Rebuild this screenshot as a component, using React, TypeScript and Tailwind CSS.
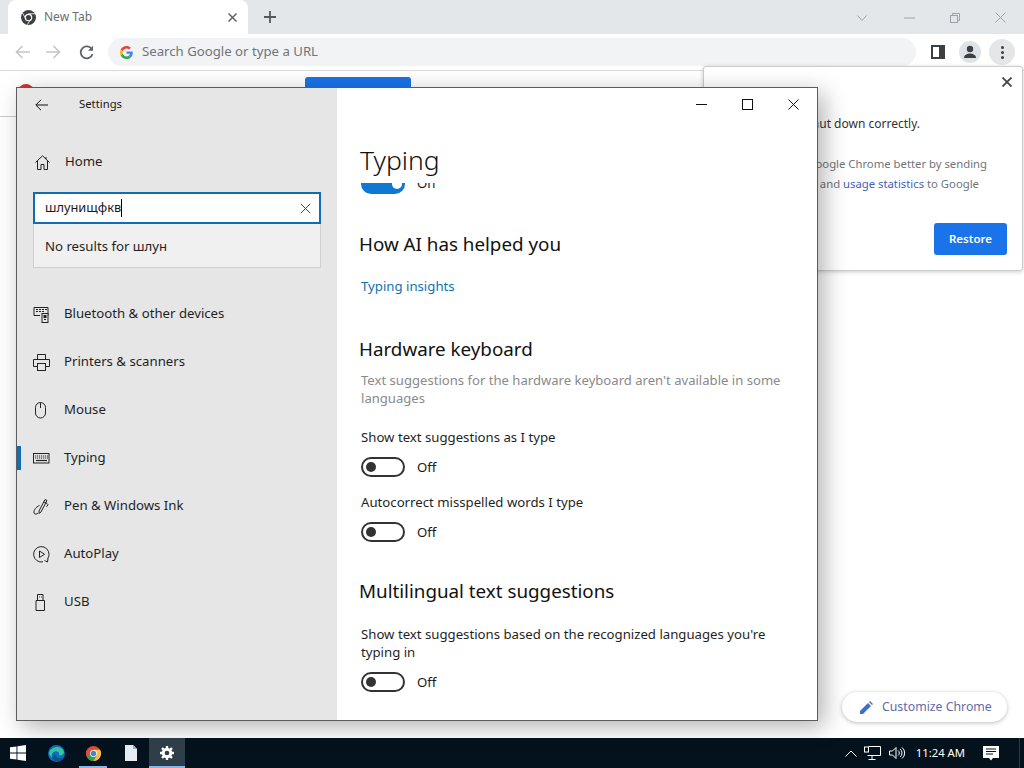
const sans = '[font-family:"Noto_Sans",sans-serif]';

function Toggle() {
  return (
    <div className="flex h-5 items-center">
      <div className="flex h-5 w-11 items-center rounded-full border-2 border-[#333333] pl-[3px]">
        <div className="h-2.5 w-2.5 rounded-full bg-[#333333]" />
      </div>
      <span className="ml-3 text-[13.2px] leading-5 text-[#1a1a1a]">Off</span>
    </div>
  );
}

function SectionHeading({ children, className }: { children: React.ReactNode; className: string }) {
  return <h2 className={`-ml-[2px] text-[18.8px] leading-7 text-[#111111] ${className}`}>{children}</h2>;
}

function NavRow({ icon, label, selected }: { icon: React.ReactNode; label: string; selected?: boolean }) {
  return (
    <div className="relative flex h-12 items-center pl-4">
      {selected && <div className="absolute left-0 top-3 h-6 w-1 bg-[#0f6cb5]" />}
      <div className="flex w-[31px] items-center text-[#222222]">{icon}</div>
      <span className="text-[13.2px] text-[#1f1f1f]">{label}</span>
    </div>
  );
}

const stroke = { fill: 'none', stroke: 'currentColor', strokeWidth: 1 };

const navItems = [
  {
    label: 'Bluetooth & other devices',
    icon: (
      <svg width="17" height="17" viewBox="0 0 17 17" {...stroke}>
        <path d="M1 1.5h14v8H11M1 1.5v8h6" />
        <path d="M3 3.5h2M6 3.5h2M9 3.5h2M12 3.5h2M3 5.5h2M6 5.5h2M9 5.5h2" strokeWidth="1.2" />
        <rect x="9" y="7.5" width="6" height="9" fill="#e6e6e6" />
        <rect x="11" y="9.5" width="2" height="2" fill="currentColor" />
        <path d="M11 13.5h2" />
      </svg>
    ),
  },
  {
    label: 'Printers & scanners',
    icon: (
      <svg width="17" height="17" viewBox="0 0 17 17" {...stroke}>
        <path d="M4.5 5.5v-5h8v5M4.5 12.5h-4v-7h16v7h-4" />
        <rect x="4.5" y="9.5" width="8" height="7" />
      </svg>
    ),
  },
  {
    label: 'Mouse',
    icon: (
      <svg width="17" height="17" viewBox="0 0 17 17" {...stroke}>
        <rect x="2.5" y="0.5" width="10" height="15.5" rx="5" />
        <path d="M7.5 1v5" />
      </svg>
    ),
  },
  {
    label: 'Typing',
    selected: true,
    icon: (
      <svg width="17" height="11" viewBox="0 0 17 11" {...stroke}>
        <rect x="0.5" y="0.5" width="15.5" height="9.5" />
        <path d="M2 3h13M2 5h13" strokeDasharray="1.2 0.8" strokeWidth="1.2" />
        <path d="M3 7.5h11" strokeWidth="1.2" />
      </svg>
    ),
  },
  {
    label: 'Pen & Windows Ink',
    icon: (
      <svg width="17" height="17" viewBox="0 0 17 17" {...stroke}>
        <path d="M6 13 12 1.5l2 1L8 14l-2 1.5zM11 4l2.5 1.2 1.5 1.5-1.5 2" />
        <path d="M6.5 7.5C3 9 .5 12 1 15c.5 1.5 3 1.5 4 0" />
      </svg>
    ),
  },
  {
    label: 'AutoPlay',
    icon: (
      <svg width="17" height="17" viewBox="0 0 17 17" {...stroke}>
        <path d="M10 15.8A7.7 7.7 0 1 1 16 8.5c0 1.700-.5 3-1.400 4.300" />
        <path d="M6.500 5v6.500l5-3.200zM11.500 14.500l3 1.500.5-3.500" />
      </svg>
    ),
  },
  {
    label: 'USB',
    icon: (
      <svg width="17" height="17" viewBox="0 0 17 17" {...stroke}>
        <path d="M3 6.500h8.500v10H3zM4.500 6.500V.5h5.500v6" />
        <path d="M6 3h.800M8 3h.800" />
      </svg>
    ),
  },
];

function SettingsWindow() {
  return (
    <div className="absolute left-4 top-[87px] flex h-[634px] w-[802px] border border-[#5c5c5c] shadow-[6px_6px_22px_rgba(0,0,0,0.3)]">
      <aside className="flex w-80 flex-col bg-[#e6e6e6]">
        <div className="flex h-[33px] items-center pl-[18px]">
          <svg width="13" height="12" viewBox="0 0 13 12" fill="none" stroke="#111" strokeWidth="1">
            <path d="M13 6H1M6 .8.800 6 6 11.200" />
          </svg>
          <span className="ml-[31px] text-[11.3px] text-[#1a1a1a]">Settings</span>
        </div>
        <div className="mt-[26px] flex h-[30px] items-center pl-[18px]">
          <svg width="15" height="15" viewBox="0 0 15 15" fill="none" stroke="#222" strokeWidth="1">
            <path d="M.5 7.500 7.500.8l7 6.700M2.500 6v8.500h3.500v-5h3v5h3.500V6M11 2v2" />
          </svg>
          <span className="ml-[15px] text-[13.2px] text-[#1f1f1f]">Home</span>
        </div>
        <div className="ml-4 mt-[15px] flex h-8 w-[288px] items-center border-2 border-[#0f6cb5] bg-white pl-[10px] pr-[8px]">
          <span className="text-[12.8px] text-[#1a1a1a]">шлунищфкв</span>
          <span className="h-[18px] w-px bg-black" />
          <svg className="ml-auto" width="11" height="11" viewBox="0 0 11 11" stroke="#444" strokeWidth="1">
            <path d="m.8.800 9.400 9.400M10.200.800.800 10.200" />
          </svg>
        </div>
        <div className="ml-4 flex h-11 w-[288px] items-center border border-t-0 border-[#cfcfcf] bg-[#f0f0f0] pl-[11px] pt-[2px]">
          <span className="text-[13.2px] text-[#1f1f1f]">No results for шлун</span>
        </div>
        <nav className="mt-[22px]">
          {navItems.map((item) => (
            <NavRow key={item.label} {...item} />
          ))}
        </nav>
      </aside>

      <main className="flex flex-1 flex-col bg-white">
        <div className="flex h-[33px] items-center justify-end">
          <svg className="mr-[35px]" width="11" height="11" viewBox="0 0 11 11" stroke="#111">
            <path d="M0 5.500h11" />
          </svg>
          <svg className="mr-[35px]" width="11" height="11" viewBox="0 0 11 11" fill="none" stroke="#111">
            <rect x="0.500" y="0.500" width="10" height="10" />
          </svg>
          <svg className="mr-[18px]" width="11" height="11" viewBox="0 0 11 11" stroke="#111">
            <path d="m.5.500 10 10M10.500.500l-10 10" />
          </svg>
        </div>
        <div className="pb-[2px] pl-[23px] pt-[18px] text-[26.5px] font-light leading-[42px] text-[#111111]">Typing</div>
        <div className="flex-1 overflow-hidden pl-6 pr-[30px]">
          <div className="-mt-[9px] flex h-5 items-center">
            <div className="flex h-5 w-11 items-center justify-end rounded-full bg-[#0f78d4] pr-[3px]">
              <div className="h-2.5 w-2.5 rounded-full bg-white" />
            </div>
            <span className="ml-3 text-[13.2px] text-[#1a1a1a]">On</span>
          </div>
          <SectionHeading className="mt-[36px]">How AI has helped you</SectionHeading>
          <a className="mt-[18px] block text-[13.2px] leading-5 text-[#0f72b0]">Typing insights</a>
          <SectionHeading className="mt-[39px]">Hardware keyboard</SectionHeading>
          <p className="mt-[8px] text-[13.1px] leading-[18px] text-[#8a8a8a]">
            Text suggestions for the hardware keyboard aren't available in some languages
          </p>
          <p className="mt-[20px] text-[13.2px] leading-5 text-[#1f1f1f]">Show text suggestions as I type</p>
          <div className="mt-[10px]">
            <Toggle />
          </div>
          <p className="mt-[15px] text-[13.2px] leading-5 text-[#1f1f1f]">Autocorrect misspelled words I type</p>
          <div className="mt-[10px]">
            <Toggle />
          </div>
          <SectionHeading className="mt-[35px]">Multilingual text suggestions</SectionHeading>
          <p className="mt-[20px] text-[13.2px] leading-[18px] text-[#1f1f1f]">
            Show text suggestions based on the recognized languages you're typing in
          </p>
          <div className="mt-[11px]">
            <Toggle />
          </div>
        </div>
      </main>
    </div>
  );
}

function RestoreBubble() {
  return (
    <div className="absolute left-[703px] top-[66px] flex h-[205px] w-[320px] flex-col rounded-[3px] border border-[#cccccc] bg-white shadow-[0_1px_4px_rgba(0,0,0,0.2)]">
      <svg className="absolute right-[10px] top-[10px]" width="10" height="10" viewBox="0 0 10 10" stroke="#444" strokeWidth="1.800">
        <path d="m.5.500 9 9M9.500.500l-9 9" />
      </svg>
      <p className="mr-[102px] mt-[47px] self-end whitespace-nowrap text-[12px] leading-5 text-[#333333]">
        Chrome didn't shut down correctly.
      </p>
      <p className="mr-[35px] mt-[20px] self-end whitespace-nowrap text-[11.3px] leading-5 text-[#70757a]">
        Help make Google Chrome better by sending
      </p>
      <p className="mr-[43px] self-end whitespace-nowrap text-[11.3px] leading-5 text-[#70757a]">
        crash reports and <span className="text-[#3f62b5]">usage statistics</span> to Google
      </p>
      <button className="mr-[15px] mt-[29px] flex h-8 w-[73px] items-center justify-center self-end rounded-[3px] bg-[#1a73e8] text-[11.5px] font-semibold text-white">
        Restore
      </button>
    </div>
  );
}

function ChromeIcon({ size }: { size: number }) {
  return (
    <svg width={size} height={size} viewBox="0 0 24 24">
      <circle cx="12" cy="12" r="12" fill="#dd4b3e" />
      <path d="M12 12 1.600 18A12 12 0 0 1 1.600 6L7 12z" fill="#dd4b3e" />
      <path d="M12 24A12 12 0 0 1 1.600 18L7 9l5 3 5.200 3z" fill="#2e9e4f" />
      <path d="M12 24a12 12 0 0 0 10.400-18H12l5.200 9z" fill="#f5c33b" />
      <circle cx="12" cy="12" r="5.500" fill="#fff" />
      <circle cx="12" cy="12" r="4.300" fill="#4a7fd6" />
    </svg>
  );
}

function BrowserChrome() {
  return (
    <>
      <div className="flex h-[34px] items-end bg-[#e3e7ea] pl-2">
        <div className="flex h-[34px] w-[240px] items-center rounded-t-[8px] bg-white pl-[13px] pr-[11px]">
          <svg width="15" height="15" viewBox="0 0 24 24">
            <circle cx="12" cy="12" r="12" fill="#3c4043" />
            <circle cx="12" cy="12" r="6" fill="#fff" />
            <circle cx="12" cy="12" r="4.200" fill="#3c4043" />
            <path d="M12 6h11M8 14.500 2.500 5M15.500 15 10 23.500" stroke="#fff" strokeWidth="1.300" />
          </svg>
          <span className="ml-2 text-[12px] text-[#6a6e72]">New Tab</span>
          <svg className="ml-auto" width="9" height="9" viewBox="0 0 9 9" stroke="#5f6368" strokeWidth="1.500">
            <path d="m.5.500 8 8M8.500.500l-8 8" />
          </svg>
        </div>
        <svg className="mb-[11px] ml-4" width="12" height="12" viewBox="0 0 12 12" stroke="#55595d" strokeWidth="1.800">
          <path d="M6 0v12M0 6h12" />
        </svg>
        <div className="mb-[11px] ml-auto flex items-center text-[#9ba3a8]">
          <svg width="10" height="6" viewBox="0 0 10 6" fill="none" stroke="currentColor">
            <path d="m.5.500 4.500 5 4.500-5" />
          </svg>
          <svg className="ml-[37px]" width="11" height="2" viewBox="0 0 11 2" stroke="currentColor">
            <path d="M0 1h11" />
          </svg>
          <svg className="ml-[35px]" width="10" height="10" viewBox="0 0 10 10" fill="none" stroke="currentColor">
            <rect x="0.500" y="2.500" width="7" height="7" />
            <path d="M2.500 2.500v-2h7v7h-2" />
          </svg>
          <svg className="ml-[35px] mr-[18px]" width="11" height="11" viewBox="0 0 11 11" stroke="currentColor">
            <path d="m.5.500 10 10M10.500.500l-10 10" />
          </svg>
        </div>
      </div>
      <div className="flex h-[37px] items-center border-b border-[#dadada] bg-white">
        <svg className="ml-[15px]" width="15" height="14" viewBox="0 0 15 14" fill="none" stroke="#c3c6c9" strokeWidth="1.600">
          <path d="M15 7H1.500M7.500 1l-6 6 6 6" />
        </svg>
        <svg className="ml-[16px]" width="15" height="14" viewBox="0 0 15 14" fill="none" stroke="#c3c6c9" strokeWidth="1.600">
          <path d="M0 7h13.500M7.500 1l6 6-6 6" />
        </svg>
        <svg className="ml-[18px]" width="15" height="15" viewBox="0 0 15 15" fill="none" stroke="#5f6368" strokeWidth="1.800">
          <path d="M13 4.500A6 6 0 1 0 13.500 9" />
          <path d="M14 .8v5H9z" fill="#5f6368" stroke="none" />
        </svg>
        <div className="ml-[14px] flex h-7 w-[808px] items-center rounded-full bg-[#f1f3f4] pl-[12px]">
          <svg width="13" height="13" viewBox="0 0 48 48">
            <path fill="#ea4335" d="M24 9.500c3.500 0 6.700 1.200 9.200 3.600l6.900-6.900C35.900 2.400 30.500 0 24 0 14.600 0 6.500 5.400 2.600 13.200l8 6.200C12.400 13.700 17.700 9.500 24 9.500z" />
            <path fill="#4285f4" d="M47 24.500c0-1.600-.2-3.100-.4-4.500H24v9h12.900c-.6 3-2.200 5.500-4.700 7.200l7.700 6C44.400 37.900 47 31.800 47 24.500z" />
            <path fill="#fbbc05" d="M10.500 28.600A14.500 14.500 0 0 1 10.500 19.400l-8-6.200a24 24 0 0 0 0 21.600z" />
            <path fill="#34a853" d="M24 48c6.500 0 11.900-2.100 15.900-5.800l-7.700-6c-2.200 1.500-5 2.300-8.200 2.300-6.300 0-11.600-4.200-13.500-10l-8 6.200C6.500 42.600 14.600 48 24 48z" />
          </svg>
          <span className="ml-[9px] text-[13.2px] text-[#70757a]">Search Google or type a URL</span>
        </div>
        <svg className="ml-[15px]" width="14" height="14" viewBox="0 0 14 14">
          <path d="M0 0h14v14H0zM2 2v10h6V2z" fill="#3c4043" fillRule="evenodd" />
        </svg>
        <div className="ml-[14px] flex h-[22px] w-[22px] items-center justify-center rounded-full bg-[#dfe3e7]">
          <svg width="14" height="14" viewBox="0 0 14 14" fill="#3c4043">
            <circle cx="7" cy="4" r="3.200" />
            <path d="M1 13c0-3 3-4.500 6-4.500s6 1.500 6 4.500z" />
          </svg>
        </div>
        <div className="ml-[8px] flex h-[26px] w-[26px] flex-col items-center justify-center gap-[2px] rounded-full bg-[#e4e6e8]">
          <div className="h-[3px] w-[3px] rounded-full bg-[#3c4043]" />
          <div className="h-[3px] w-[3px] rounded-full bg-[#3c4043]" />
          <div className="h-[3px] w-[3px] rounded-full bg-[#3c4043]" />
        </div>
      </div>
    </>
  );
}

function Taskbar() {
  return (
    <div className="flex h-[30px] items-center bg-[#03121d] text-white">
      <svg className="ml-[10px]" width="16" height="16" viewBox="0 0 16 16" fill="#fff">
        <path d="M0 2.300 6.500 1.400V7.500H0zM7.400 1.300 16 0v7.500H7.400zM0 8.500h6.500v6.100L0 13.700zM7.400 8.500H16V16l-8.600-1.300z" />
      </svg>
      <svg className="ml-[22px]" width="17" height="17" viewBox="0 0 24 24">
        <circle cx="12" cy="12" r="12" fill="#0c6fb8" />
        <path d="M2 10C4 3 17-1 22 8c2 5-3 8-7 6 2-3-1-6-5-5-4 1-6 5-4 9-3-2-5-5-4-8z" fill="#39c2a4" />
        <path d="M10 13c0 5 6 8 12 4-3 6-10 8-14 4-2-2-2-6 2-8z" fill="#124f8e" />
      </svg>
      <div className="relative ml-[14px] flex h-[30px] w-7 items-center justify-center">
        <ChromeIcon size={15} />
        <div className="absolute bottom-0 left-0 h-[2px] w-7 bg-[#8ab4e8]" />
      </div>
      <svg className="ml-[18px]" width="12" height="16" viewBox="0 0 12 16">
        <path d="M0 0h8l4 4v12H0z" fill="#e8edf2" />
        <path d="M8 0v4h4z" fill="#9fb2c2" />
      </svg>
      <div className="relative ml-[12px] flex h-[30px] w-9 items-center justify-center bg-[#2f3f4a]">
        <svg width="14" height="14" viewBox="0 0 24 24" fill="none" stroke="#fff" strokeWidth="5">
          <circle cx="12" cy="12" r="6.500" />
          <path d="M12 0v5M12 19v5M0 12h5M19 12h5M3.500 3.500 7 7M17 17l3.500 3.500M20.500 3.500 17 7M7 17l-3.500 3.500" strokeWidth="4" />
        </svg>
        <div className="absolute bottom-0 left-0 h-[2px] w-9 bg-[#8ab4e8]" />
      </div>
      <svg className="ml-auto" width="12" height="7" viewBox="0 0 12 7" fill="none" stroke="#fff">
        <path d="m.5 6.500 5.500-5.500 5.500 5.500" />
      </svg>
      <svg className="ml-[7px]" width="17" height="14" viewBox="0 0 17 14" fill="none" stroke="#fff">
        <path d="M4.500.5h12v9h-13M8 9.500v4M4.500 13.500h7" />
        <rect x="0.500" y="1" width="4" height="5" fill="#03121d" />
      </svg>
      <svg className="ml-[8px]" width="16" height="14" viewBox="0 0 16 14" fill="none" stroke="#fff">
        <path d="M.5 5v4h3l3.500 3.500v-11L3.500 5z" />
        <path d="M9 4.500a3 3 0 0 1 0 5M11 3a5 5 0 0 1 0 8M13 1.500a7 7 0 0 1 0 11" />
      </svg>
      <span className="ml-[11px] text-[11.3px]">11:24 AM</span>
      <svg className="ml-[18px] mr-[20px]" width="16" height="15" viewBox="0 0 16 15">
        <path d="M0 0h16v12H10l-2 2.500L6 12H0z" fill="#fff" />
        <path d="M3 3h10M3 5.500h10M3 8h7" stroke="#03121d" />
      </svg>
      <div className="mr-1 h-full w-px bg-[#2a3a45]" />
    </div>
  );
}

export default function App() {
  return (
    <div className={`relative flex h-[768px] w-[1024px] flex-col overflow-hidden bg-white ${sans}`}>
      <BrowserChrome />
      <div className="relative flex-1">
        <div className="absolute left-0 top-[45px] h-px w-4 bg-[#cccccc]" />
      </div>
      <div className="absolute left-[18px] top-[84px] h-4 w-4 rounded-full bg-[#c5392f]" />
      <div className="absolute left-[305px] top-[77px] h-5 w-[106px] rounded-[3px] bg-[#1a73e8]" />
      <RestoreBubble />
      <div className="absolute bottom-[46px] right-[17px] flex h-[30px] w-[165px] items-center rounded-full bg-white pl-[18px] shadow-[0_1px_4px_rgba(60,64,67,0.35)]">
        <svg width="13" height="13" viewBox="0 0 13 13" fill="#3f6fc4">
          <path d="M0 13V10L8 2l3 3-8 8zM9 1l1-1 3 3-1 1z" />
        </svg>
        <span className="ml-[9px] text-[12.3px] text-[#5f6bab]">Customize Chrome</span>
      </div>
      <SettingsWindow />
      <Taskbar />
    </div>
  );
}
